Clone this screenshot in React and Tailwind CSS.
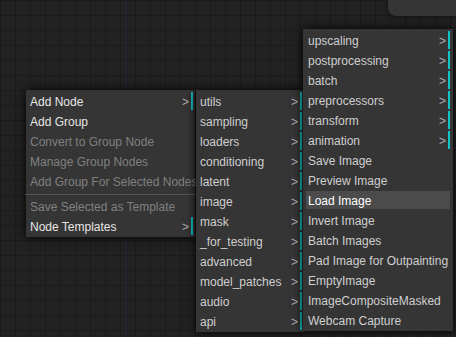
import React from "react";
import clsx from "clsx";

const mainMenu = [
  { label: "Add Node", sub: true, bright: true },
  { label: "Add Group", bright: true },
  { label: "Convert to Group Node", disabled: true },
  { label: "Manage Group Nodes", disabled: true },
  { label: "Add Group For Selected Nodes", disabled: true },
  { separator: true },
  { label: "Save Selected as Template", disabled: true },
  { label: "Node Templates", sub: true, bright: true },
];

const categories = [
  "utils",
  "sampling",
  "loaders",
  "conditioning",
  "latent",
  "image",
  "mask",
  "_for_testing",
  "advanced",
  "model_patches",
  "audio",
  "api",
].map((label) => ({ label, sub: true }));

const imageNodes = [
  { label: "upscaling", sub: true },
  { label: "postprocessing", sub: true },
  { label: "batch", sub: true },
  { label: "preprocessors", sub: true },
  { label: "transform", sub: true },
  { label: "animation", sub: true },
  { label: "Save Image" },
  { label: "Preview Image" },
  { label: "Load Image", active: true },
  { label: "Invert Image" },
  { label: "Batch Images" },
  { label: "Pad Image for Outpainting" },
  { label: "EmptyImage" },
  { label: "ImageCompositeMasked" },
  { label: "Webcam Capture" },
];

function Entry({ label, sub, disabled, active, bright }) {
  return (
    <div
      className={clsx(
        "relative h-[18px] leading-[20px] pl-[2px] whitespace-nowrap",
        sub && "border-r-2 border-[#14c3c9]",
        active && "bg-[#4b4b4b] text-white",
        !active && (disabled ? "text-[#808080]" : bright ? "text-[#e6e6e6]" : "text-[#cfcfcf]")
      )}
    >
      {label}
      {sub && (
        <span className="absolute right-[2px] top-0 text-[#b0b0b0]">&gt;</span>
      )}
    </div>
  );
}

function Menu({ items, className }) {
  return (
    <div
      className={clsx(
        "absolute flex flex-col gap-[2px] py-[2px] bg-[#353535] shadow-[0_0_10px_black] text-[12px]",
        className
      )}
    >
      {items.map((it, i) =>
        it.separator ? (
          <div key={i} className="-mx-[3px] mt-[2px] h-px bg-[#555]" />
        ) : (
          <Entry key={i} {...it} />
        )
      )}
    </div>
  );
}

export default function App() {
  return (
    <div
      className="relative w-[456px] h-[337px] overflow-hidden bg-[#222] bg-[linear-gradient(#1b1b1b_1px,transparent_1px),linear-gradient(90deg,#1b1b1b_1px,transparent_1px)] bg-[size:15px_15px]"
      style={{ fontFamily: '"Liberation Sans", Arial, sans-serif' }}
    >
      {/* link line */}
      <div className="absolute left-[125px] top-0 bottom-0 w-px bg-[#1e2940]" />

      {/* top right panel */}
      <div className="absolute top-0 right-0 w-[68px] h-[16px] bg-[#353535] rounded-bl-[8px] shadow-[0_0_6px_rgba(0,0,0,0.6)]" />

      <Menu items={mainMenu} className="left-[26px] top-[90px] w-[169px] px-[2px]" />
      <Menu items={categories} className="left-[196px] top-[90px] w-[108px] px-[2px]" />
      <Menu items={imageNodes} className="left-[303px] top-[29px] w-[150px] px-[3px]" />
    </div>
  );
}
